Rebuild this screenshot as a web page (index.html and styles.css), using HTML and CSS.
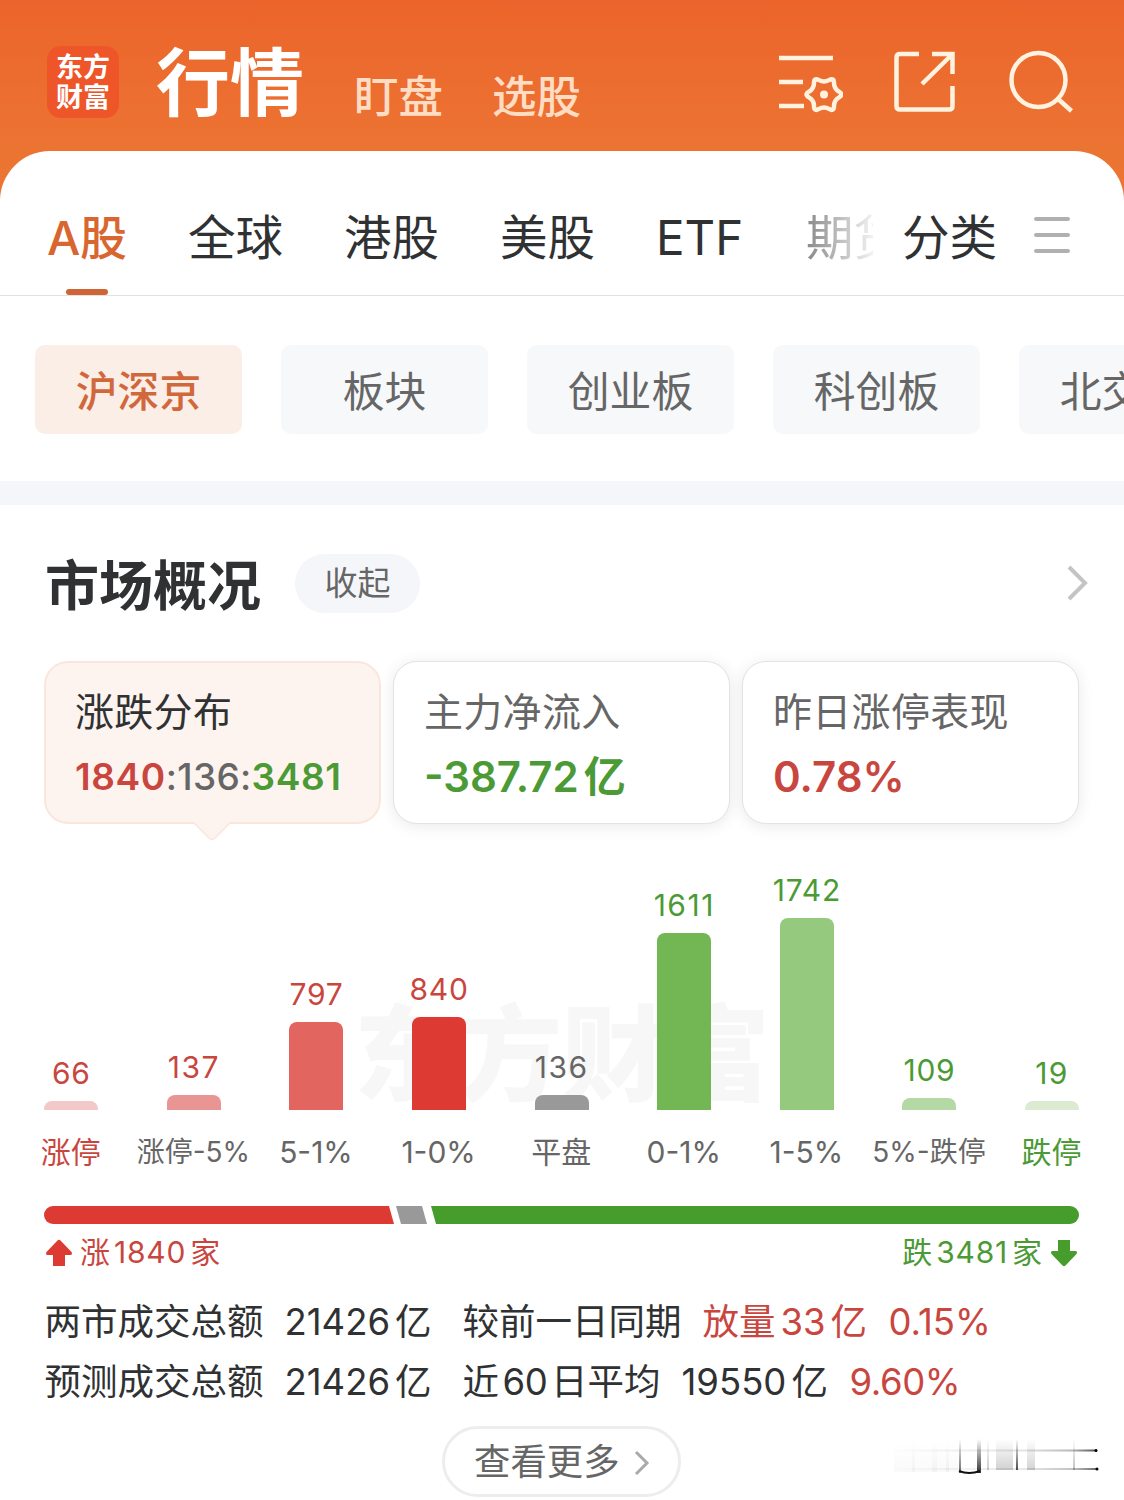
FILE: index.html
```html
<!DOCTYPE html>
<html lang="zh-CN">
    <head>
        <meta charset="utf-8">
        <title>行情</title>
        <link rel="stylesheet" href="styles.css">
    </head>
    <body>
        <header class="top">
            <div class="logo"><span>东方</span><span>财富</span></div>
            <h1>行情</h1>
            <span class="toplink">盯盘</span>
            <span class="toplink">选股</span>
            <div class="icons">
                <svg class="ic-set" width="66" height="64" viewBox="0 0 66 64">
                    <path d="M2 8H56M2 32H26M2 56H27"/>
                    <path d="M62 41.600Q67 44.500 62 47.400Q57 50.300 57 56.100Q57 61.800 52 58.900Q47 56 42 58.900Q37 61.800 37 56.100Q37 50.300 32 47.400Q27 44.500 32 41.600Q37 38.700 37 33Q37 27.200 42 30.100Q47 33 52 30.100Q57 27.200 57 33Q57 38.700 62 41.600Z"/>
                    <circle class="dot" cx="47" cy="44.500" r="4"/>
                </svg>
                <svg class="ic-share" width="64" height="64" viewBox="0 0 64 64">
                    <path d="M26 4H7Q3.500 4 3.500 7.500V56Q3.500 59.500 7 59.500H56Q59.500 59.500 59.500 56V36M39 4H59.500V24M59 4.500L29 34"/>
                </svg>
                <svg class="ic-find" width="68" height="66" viewBox="0 0 68 66">
                    <circle cx="30.500" cy="30" r="27"/>
                    <path d="M49 48L63.500 61"/>
                </svg>
            </div>
        </header>
        <div class="sheet">
            <nav class="tabs">
                <span class="tab selected">A股</span>
                <span class="tab">全球</span>
                <span class="tab">港股</span>
                <span class="tab">美股</span>
                <span class="tab etf">ETF</span>
                <span class="tab fade">期货</span>
                <span class="tab kinds">分类</span>
                <span class="burger"><i></i><i></i><i></i></span>
            </nav>
            <div class="chips">
                <span class="chip on">沪深京</span>
                <span class="chip">板块</span>
                <span class="chip">创业板</span>
                <span class="chip">科创板</span>
                <span class="chip">北交所</span>
            </div>
            <div class="band"></div>
            <div class="heading">
                <h2>市场概况</h2>
                <span class="pill">收起</span>
                <svg class="more" width="24" height="38" viewBox="0 0 24 38"><path d="M3 3L19 19L3 35"/></svg>
            </div>
            <div class="cards">
                <div class="card active">
                    <p>涨跌分布</p>
                    <b><span class="red">1840</span><span class="mid">:136:</span><span class="green">3481</span></b>
                    <svg class="tip" width="40" height="20" viewBox="0 0 40 20"><path d="M0 0Q3 1 6 5L17 16Q20 19 23 16L34 5Q37 1 40 0"/></svg>
                </div>
                <div class="card">
                    <p>主力净流入</p>
                    <b class="big green">-387.72<span class="yi">亿</span></b>
                </div>
                <div class="card">
                    <p>昨日涨停表现</p>
                    <b class="big red">0.78%</b>
                </div>
            </div>
            <div class="chart">
                <div class="mark">东方财富</div>
                <div class="col red"><em>66</em><i class="r1" style="height:9px"></i><span>涨停</span></div>
                <div class="col red"><em class="wide">137</em><i class="r2" style="height:15px"></i><span class="grey small">涨停-5%</span></div>
                <div class="col red"><em>797</em><i class="r3" style="height:88px"></i><span class="grey">5-1%</span></div>
                <div class="col red"><em>840</em><i class="r4" style="height:93px"></i><span class="grey">1-0%</span></div>
                <div class="col grey"><em class="wide">136</em><i class="flat" style="height:15px"></i><span>平盘</span></div>
                <div class="col green"><em class="wide">1611</em><i class="g4" style="height:177px"></i><span class="grey">0-1%</span></div>
                <div class="col green"><em>1742</em><i class="g3" style="height:192px"></i><span class="grey">1-5%</span></div>
                <div class="col green"><em>109</em><i class="g2" style="height:12px"></i><span class="grey small">5%-跌停</span></div>
                <div class="col green"><em class="wide">19</em><i class="g1" style="height:9px"></i><span>跌停</span></div>
            </div>
            <div class="ratio">
                <i class="up"></i>
                <i class="even"></i>
                <i class="down"></i>
            </div>
            <div class="counts">
                <svg width="28" height="28" viewBox="0 0 28 28"><path class="fill-red" d="M12.500 1.500Q14 0 15.500 1.500L26.500 13Q28 16 25 16H20V27H8V16H3Q0 16 1.500 13Z"/></svg>
                <span class="red">涨<u>1840</u>家</span>
                <span class="green last">跌<u>3481</u>家</span>
                <svg width="28" height="28" viewBox="0 0 28 28"><path class="fill-green" d="M12.500 26.500Q14 28 15.500 26.500L26.500 15Q28 12 25 12H20V1H8V12H3Q0 12 1.500 15Z"/></svg>
            </div>
            <div class="stats">
                <div class="row">
                    <span class="c1">两市成交总额</span>
                    <span class="c2"><u>21426</u>亿</span>
                    <span class="c3">较前一日同期</span>
                    <span class="c4 red">放量<u>33</u>亿</span>
                    <span class="red">0.15%</span>
                </div>
                <div class="row">
                    <span class="c1">预测成交总额</span>
                    <span class="c2"><u>21426</u>亿</span>
                    <span class="c3 avg">近<u>60</u>日平均</span>
                    <span class="c4 avg"><u>19550</u>亿</span>
                    <span class="red last-pct">9.60%</span>
                </div>
            </div>
            <div class="foot">
                <span class="all">查看更多<svg width="16" height="26" viewBox="0 0 16 26"><path d="M2 2L13 13L2 24"/></svg></span>
                <svg class="smudge" width="216" height="40" viewBox="0 0 216 40">
                    <defs>
                        <linearGradient id="v" x1="0" y1="0" x2="0" y2="1"><stop offset="0" stop-color="#000" stop-opacity="0"/><stop offset="1" stop-color="#000"/></linearGradient>
                        <linearGradient id="h" x1="0" y1="0" x2="1" y2="0"><stop offset="0" stop-color="#000" stop-opacity="0"/><stop offset=".65" stop-color="#000" stop-opacity=".16"/><stop offset=".88" stop-color="#000" stop-opacity=".4"/><stop offset="1" stop-color="#000"/></linearGradient>
                    </defs>
                    <g fill="url(#v)">
                        <rect x="4" y="4" width="64" height="31" opacity=".02"/>
                        <rect x="22" y="4" width="3" height="31" opacity=".03"/>
                        <rect x="42" y="4" width="5" height="31" opacity=".03"/>
                        <rect x="56" y="4" width="3" height="31" opacity=".04"/>
                        <rect x="69" y="2" width="2" height="34" opacity=".6"/>
                        <rect x="87" y="2" width="4" height="34" opacity=".8"/>
                        <rect x="97" y="2" width="2" height="31" opacity=".2"/>
                        <rect x="106" y="2" width="17" height="31" opacity=".18"/>
                        <rect x="126" y="2" width="2" height="31" opacity=".7"/>
                        <rect x="137" y="2" width="8" height="31" opacity=".17"/>
                        <rect x="183" y="2" width="2" height="31" opacity=".25"/>
                    </g>
                    <path d="M69 34Q79 38 90 34" fill="none" stroke="#111" stroke-width="2"/>
                    <rect x="0" y="12.500" width="207" height="2" fill="url(#h)" opacity=".7"/>
                    <rect x="0" y="31" width="208" height="2" fill="url(#h)" opacity=".6"/>
                    <circle cx="206" cy="13.500" r="1.500" fill="#000"/>
                    <circle cx="207" cy="32" r="1.500" fill="#000"/>
                </svg>
            </div>
        </div>
    </body>
</html>
```
FILE: styles.css
```css
body{
    margin:0;
    width:1124px;
    height:1500px;
    overflow:hidden;
    background:linear-gradient(#ec642b 0px, #ec7433 150px, #ec7635 220px);
    font-family:Inter,"Noto Sans CJK SC",sans-serif;
    color:#303133;
}
h1,h2,p{
    margin:0;
}
i,em{
    font-style:normal;
}
u{
    text-decoration:none;
}
span,b,h1,h2,p,em{
    white-space:nowrap;
}
svg{
    fill:none;
    flex:none;
}
.red{
    color:#c9463f;
}
.green{
    color:#4b9a35;
}
.grey{
    color:#666;
}
.top{
    height:151px;
    display:flex;
    color:#fff;
}
.logo{
    width:72px;
    height:72px;
    margin:46px 37px 0 47px;
    border-radius:14px;
    background:#ee5529;
    display:flex;
    flex-direction:column;
    align-items:center;
    font-size:27px;
    font-weight:700;
    line-height:30px;
    padding-top:7px;
    box-sizing:border-box;
}
h1{
    font-size:74px;
    font-weight:700;
    line-height:80px;
    margin-top:43px;
    width:198px;
}
.toplink{
    font-size:44.500px;
    font-weight:500;
    line-height:60px;
    margin-top:67px;
    width:138px;
    color:#ffdcc2;
}
.icons{
    display:flex;
    margin-left:147px;
    padding-top:50px;
}
.icons svg{
    stroke:#fff3e0;
    stroke-width:4.500;
}
.icons .dot{
    fill:#fff3e0;
    stroke:none;
}
.ic-share{
    margin-left:50px;
}
.ic-find{
    margin-left:51px;
}
.sheet{
    height:1349px;
    background:#fff;
    border-radius:50px 50px 0 0;
    overflow:hidden;
}
.tabs{
    height:144px;
    border-bottom:1px solid #e2e2e2;
    display:flex;
    padding-left:47px;
}
.tab{
    font-size:47.500px;
    line-height:60px;
    margin-top:57px;
    width:156px;
    flex:none;
}
.tab.selected{
    width:141px;
    font-size:47px;
    font-weight:500;
    letter-spacing:-.3px;
    color:#d9652f;
    display:flex;
    flex-direction:column;
    height:87px;
}
.tab.selected::after{
    content:"";
    width:42px;
    height:6px;
    border-radius:3px;
    background:#cf6436;
    margin:21px 0 0 19px;
}
.tab.etf{
    width:150px;
}
.tab.fade{
    width:67px;
    overflow:hidden;
    background:linear-gradient(90deg,#888,#f2f2f2);
    -webkit-background-clip:text;
    background-clip:text;
    color:transparent;
}
.tab.kinds{
    width:94px;
    margin-left:29px;
}
.burger{
    margin:66px 0 0 38px;
}
.burger i{
    display:block;
    width:36px;
    height:4px;
    border-radius:2px;
    background:#b0b0b0;
    margin-bottom:12px;
}
.chips{
    display:flex;
    gap:39px;
    padding:49px 0 47px 35px;
}
.chip{
    flex:none;
    box-sizing:border-box;
    width:207px;
    height:89px;
    border-radius:10px;
    background:#f7f8fa;
    color:#666;
    font-size:41.800px;
    line-height:90px;
    padding-top:2px;
    text-align:center;
}
.chip.on{
    background:#faeee7;
    color:#d1683c;
    font-weight:500;
}
.band{
    height:24px;
    background:#f5f6f9;
}
.heading{
    display:flex;
    padding:49px 0 48px 45px;
    height:59px;
}
h2{
    font-size:54px;
    font-weight:700;
    line-height:65px;
    width:250px;
}
.pill{
    width:125px;
    border-radius:30px;
    background:#f5f6fa;
    color:#666;
    font-size:33px;
    line-height:58px;
    text-align:center;
}
.more{
    margin:10px 34px 0 auto;
    stroke:#c4c4c4;
    stroke-width:4;
}
.cards{
    display:flex;
    gap:12px;
    padding-left:44px;
}
.card{
    position:relative;
    box-sizing:border-box;
    width:337px;
    height:163px;
    border:1px solid #e3e3e3;
    border-radius:24px;
    background:#fff;
    box-shadow:0 2px 16px rgba(0,0,0,.09);
    padding:25px 0 0 30px;
    color:#666;
}
.card.active{
    background:#fdf4ef;
    border:2px solid #fbe6dc;
    padding:24px 0 0 29px;
    box-shadow:none;
}
.card p{
    font-size:39px;
    line-height:50px;
    letter-spacing:.3px;
}
.card.active p{
    color:#303133;
}
.card b{
    display:block;
    font-size:37px;
    font-weight:600;
    line-height:50px;
    margin-top:15px;
    letter-spacing:.600px;
}
.card .mid{
    font-weight:500;
    letter-spacing:.3px;
}
.card .big{
    font-size:42px;
    letter-spacing:0;
}
.yi{
    margin-left:5px;
}
.tip{
    position:absolute;
    left:146px;
    top:159px;
    fill:#fdf4ef;
    stroke:#fbe6dc;
    stroke-width:1.500;
}
.chart{
    position:relative;
    height:350px;
    padding-left:10px;
    display:flex;
}
.mark{
    position:absolute;
    left:354px;
    top:169px;
    font-size:104px;
    font-weight:900;
    line-height:124px;
    color:#f7f7f7;
}
.col{
    position:relative;
    width:122.600px;
    flex:none;
    display:flex;
    flex-direction:column;
    align-items:center;
    justify-content:flex-end;
}
.col em{
    font-size:30px;
    line-height:36px;
    margin-bottom:10px;
    letter-spacing:.8px;
}
.col .wide{
    letter-spacing:1.500px;
}
.col i{
    width:54px;
    flex:none;
    border-radius:8px 8px 0 0;
}
.col span{
    font-size:30px;
    line-height:40px;
    margin:22px 1px 2px 0;
}
.col .small{
    font-size:28px;
    margin:22px 1px 2px 0;
}
.r1{background:#f2c9c8;}
.r2{background:#e99593;}
.r3{background:#e36560;}
.r4{background:#dc3a32;}
.flat{background:#999;}
.g4{background:#73b755;}
.g3{background:#95ca7e;}
.g2{background:#b5d9a4;}
.g1{background:#daebd2;}
.ratio{
    display:flex;
    height:18px;
    margin:32px 45px 0 44px;
}
.up{
    width:350px;
    background:#dc3a32;
    border-radius:9px 0 0 9px;
    clip-path:polygon(0 0,345px 0,350px 100%,0 100%);
}
.even{
    width:31px;
    margin:0 4px 0 2px;
    background:#999;
    clip-path:polygon(0 0,26px 0,31px 100%,5px 100%);
}
.down{
    flex:1;
    background:#469d2c;
    border-radius:0 9px 9px 0;
    clip-path:polygon(0 0,100% 0,100% 100%,5px 100%);
}
.counts{
    display:flex;
    height:40px;
    margin:8px 46px 0 45px;
    font-size:30px;
    line-height:40px;
}
.counts svg{
    margin-top:7px;
}
.counts span{
    margin-left:7px;
}
.counts .last{
    margin:0 8px 0 auto;
}
.counts u{
    margin:0 4px;
    letter-spacing:.8px;
}
.fill-red{
    fill:#dc3a32;
}
.fill-green{
    fill:#469d2c;
}
.stats{
    padding:20px 0 0 44.500px;
}
.row{
    display:flex;
    height:60px;
    font-size:36.500px;
    line-height:60px;
}
.row u{
    margin-right:5px;
}
.c1{
    width:240px;
}
.c2{
    width:178px;
}
.c3{
    width:240px;
}
.c4{
    width:186px;
}
.c4 u{
    margin-left:5px;
}
.c3.avg{
    width:219px;
}
.row .c3 u{
    margin:0 3.500px;
    letter-spacing:-.3px;
}
.c4.avg{
    width:168px;
}
.c4.avg u{
    margin-left:0;
}
.last-pct{
    letter-spacing:-.4px;
}
.foot{
    display:flex;
    padding:14px 0 0 442px;
}
.all{
    box-sizing:border-box;
    width:239px;
    height:71px;
    border:3px solid #ededed;
    border-radius:36px;
    padding-left:29px;
    font-size:36.400px;
    line-height:67px;
    color:#666;
}
.all svg{
    stroke:#aaa;
    stroke-width:3;
    margin-left:14px;
    vertical-align:-1px;
}
.smudge{
    margin:11px 0 0 209px;
}
```
